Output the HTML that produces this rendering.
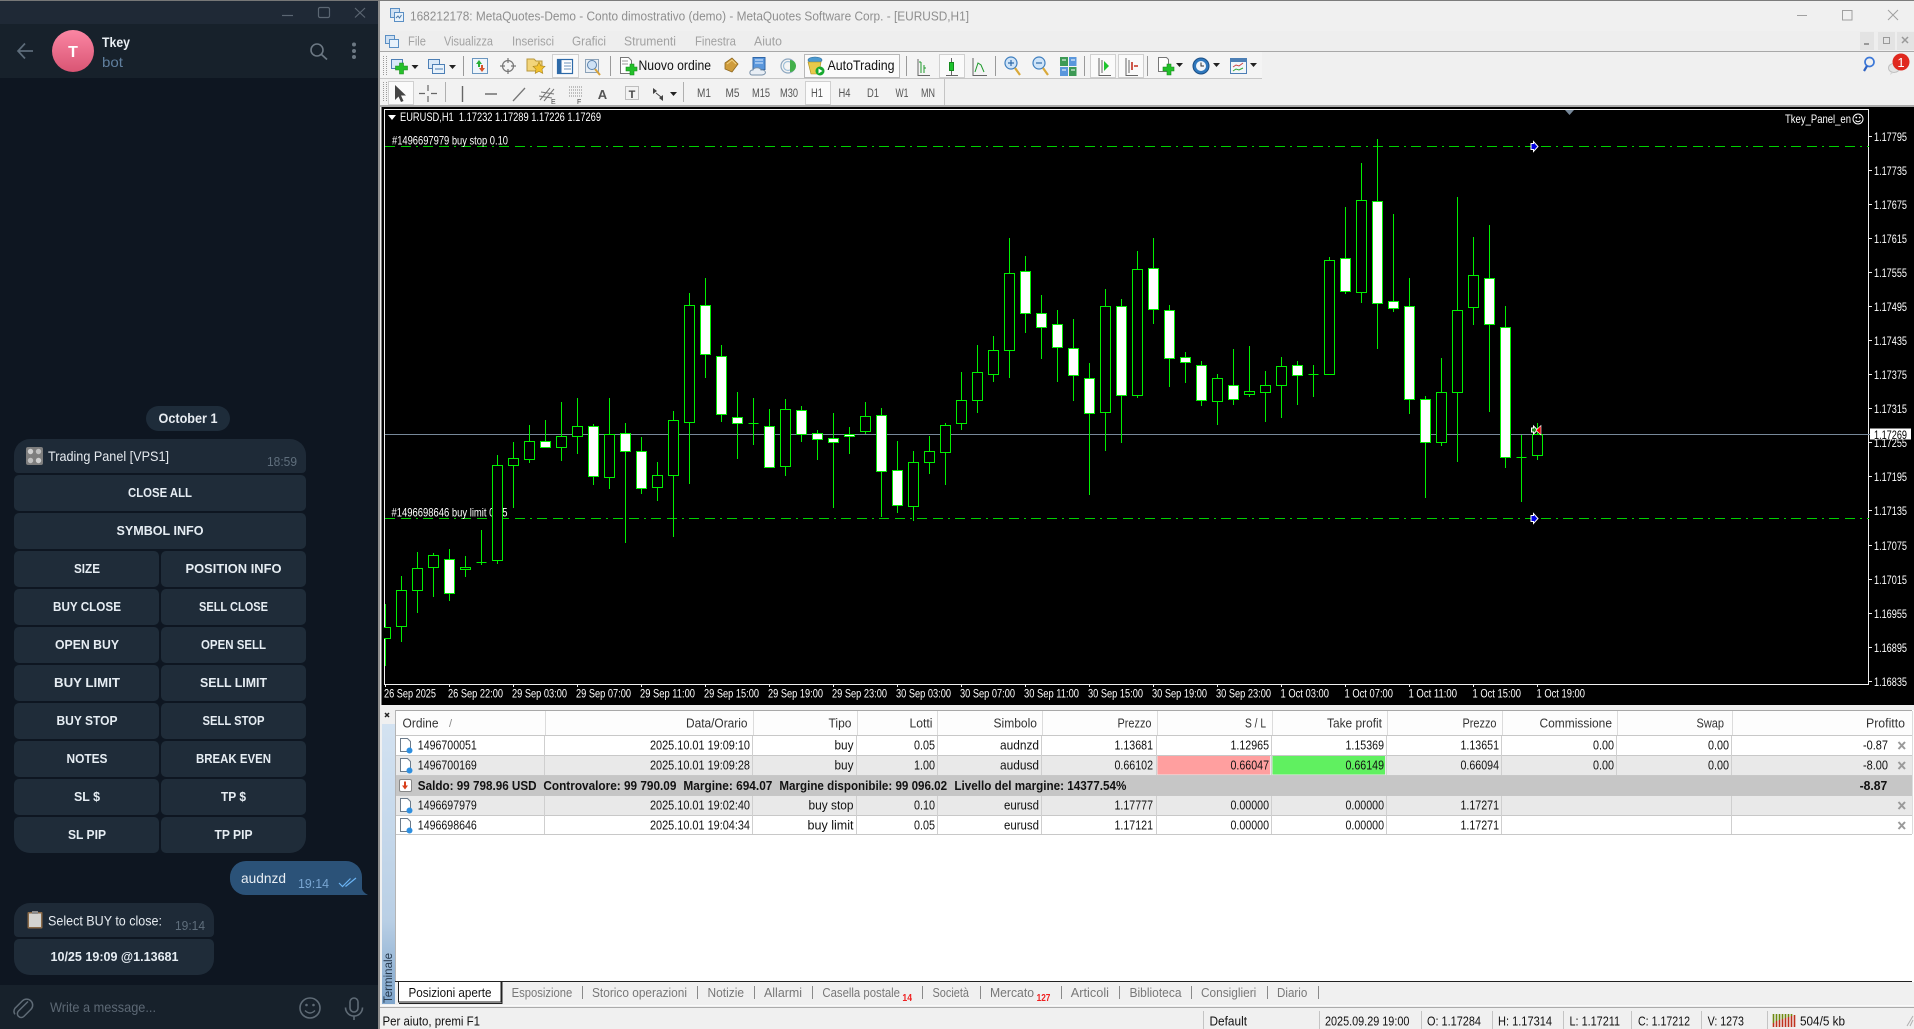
<!DOCTYPE html>
<html lang="it">
<head>
<meta charset="utf-8">
<title>Telegram and MetaTrader</title>
<style>
html,body{margin:0;padding:0;width:1914px;height:1029px;overflow:hidden;background:#f0f0f0}
svg{display:block;position:absolute;left:0;top:0}
text{font-family:"Liberation Sans",sans-serif;white-space:pre}
.b{font-weight:700;font-size:12.5px;fill:#e6edf3;text-anchor:middle}
.m{font-size:13px;fill:#111}
.r{font-size:13px;fill:#111;text-anchor:end}
.h{font-size:13px;fill:#333;text-anchor:end}
.s{font-size:13px;fill:#111;font-weight:700}
.t{font-size:13px;fill:#777}
.f{font-size:11.5px;fill:#555;text-anchor:middle}
.c{font-size:12px;fill:#fff}
.p{font-size:13px;fill:#111}
.mn{font-size:13px;fill:#a2a2a2}
</style>
</head>
<body>
<svg width="1914" height="1029" viewBox="0 0 1914 1029" xmlns="http://www.w3.org/2000/svg">
<defs>
<linearGradient id="av" x1="0" y1="0" x2="0" y2="1"><stop offset="0" stop-color="#fb86a3"/><stop offset="1" stop-color="#d95574"/></linearGradient>
<linearGradient id="st" x1="0" y1="0" x2="0" y2="1"><stop offset="0" stop-color="#d3e2f1"/><stop offset=".7" stop-color="#b9cfe5"/><stop offset="1" stop-color="#7fa5cb"/></linearGradient>
<clipPath id="cc"><rect x="384" y="109" width="1485" height="575"/></clipPath>
</defs>

<!-- ===== TELEGRAM ===== -->
<rect x="0" y="0" width="380" height="1029" fill="#0e1621"/>
<rect x="378" y="0" width="2" height="1029" fill="#8c8c8c"/>
<rect x="0" y="1" width="378" height="23" fill="#1f2936"/>
<rect x="0" y="0" width="380" height="1" fill="#777"/>
<rect x="0" y="24" width="378" height="54" fill="#17212b"/>
<path d="M282 15.500h11" stroke="#5b6672" stroke-width="1.200"/>
<rect x="318.500" y="7.500" width="11" height="10" rx="1.500" fill="none" stroke="#5b6672" stroke-width="1.200"/>
<path d="M355 8l10 9.500M365 8l-10 9.500" stroke="#5b6672" stroke-width="1.200"/>
<path d="M33 51H18.500M25 43.500L18 51l7 7.500" fill="none" stroke="#5d6c7a" stroke-width="1.700"/>
<circle cx="73" cy="51" r="21" fill="url(#av)"/>
<text x="73" y="57" text-anchor="middle" font-size="16" font-weight="700" fill="#fff">T</text>
<text x="102" y="47" font-size="14" font-weight="700" fill="#e9eef3" textLength="28" lengthAdjust="spacingAndGlyphs">Tkey</text>
<text x="102" y="67" font-size="14" fill="#607f9e" textLength="21" lengthAdjust="spacingAndGlyphs">bot</text>
<circle cx="317" cy="50" r="6" fill="none" stroke="#6c7883" stroke-width="1.600"/>
<path d="M321.500 54.500l5.500 5" stroke="#6c7883" stroke-width="1.700"/>
<circle cx="354" cy="44.500" r="2" fill="#6c7883"/><circle cx="354" cy="51" r="2" fill="#6c7883"/><circle cx="354" cy="57" r="2" fill="#6c7883"/>

<rect x="146" y="406" width="84" height="25" rx="12.500" fill="#1e2c3a"/>
<text x="188" y="423" text-anchor="middle" font-size="13.500" font-weight="700" fill="#e8edf2" textLength="59" lengthAdjust="spacingAndGlyphs">October 1</text>

<path d="M30 439H290a16 16 0 0 1 16 16V469a4 4 0 0 1-4 4H18a4 4 0 0 1-4-4V455a16 16 0 0 1 16-16z" fill="#1e2a37"/>
<rect x="26" y="447" width="17" height="18" rx="2" fill="#7e7e7e"/>
<circle cx="30.500" cy="451.500" r="2.700" fill="#cfcfcf"/><circle cx="38.500" cy="451.500" r="2.700" fill="#bfbfbf"/><circle cx="30.500" cy="460.500" r="2.700" fill="#bfbfbf"/><circle cx="38.500" cy="460.500" r="2.700" fill="#cfcfcf"/>
<text x="48" y="461" font-size="14" fill="#e6ebf0" textLength="121" lengthAdjust="spacingAndGlyphs">Trading Panel [VPS1]</text>
<text x="267" y="466" font-size="13" fill="#5f6e7c" textLength="30" lengthAdjust="spacingAndGlyphs">18:59</text>

<g fill="#1f2c39">
<rect x="14" y="475" width="292" height="36" rx="5"/>
<rect x="14" y="513" width="292" height="36" rx="5"/>
<rect x="14" y="551" width="145" height="36" rx="5"/><rect x="161" y="551" width="145" height="36" rx="5"/>
<rect x="14" y="589" width="145" height="36" rx="5"/><rect x="161" y="589" width="145" height="36" rx="5"/>
<rect x="14" y="627" width="145" height="36" rx="5"/><rect x="161" y="627" width="145" height="36" rx="5"/>
<rect x="14" y="665" width="145" height="36" rx="5"/><rect x="161" y="665" width="145" height="36" rx="5"/>
<rect x="14" y="703" width="145" height="36" rx="5"/><rect x="161" y="703" width="145" height="36" rx="5"/>
<rect x="14" y="741" width="145" height="36" rx="5"/><rect x="161" y="741" width="145" height="36" rx="5"/>
<rect x="14" y="779" width="145" height="36" rx="5"/><rect x="161" y="779" width="145" height="36" rx="5"/>
<path d="M19 817H154a5 5 0 0 1 5 5V848a5 5 0 0 1-5 5H30a16 16 0 0 1-16-16V822a5 5 0 0 1 5-5z"/>
<path d="M166 817H301a5 5 0 0 1 5 5V837a16 16 0 0 1-16 16H166a5 5 0 0 1-5-5V822a5 5 0 0 1 5-5z"/>
</g>
<g>
<text class="b" x="160" y="497" textLength="64" lengthAdjust="spacingAndGlyphs">CLOSE ALL</text>
<text class="b" x="160" y="535" textLength="87" lengthAdjust="spacingAndGlyphs">SYMBOL INFO</text>
<text class="b" x="87" y="573" textLength="26" lengthAdjust="spacingAndGlyphs">SIZE</text>
<text class="b" x="233.500" y="573" textLength="96" lengthAdjust="spacingAndGlyphs">POSITION INFO</text>
<text class="b" x="87" y="611" textLength="68" lengthAdjust="spacingAndGlyphs">BUY CLOSE</text>
<text class="b" x="233.500" y="611" textLength="69" lengthAdjust="spacingAndGlyphs">SELL CLOSE</text>
<text class="b" x="87" y="649" textLength="64" lengthAdjust="spacingAndGlyphs">OPEN BUY</text>
<text class="b" x="233.500" y="649" textLength="65" lengthAdjust="spacingAndGlyphs">OPEN SELL</text>
<text class="b" x="87" y="687" textLength="66" lengthAdjust="spacingAndGlyphs">BUY LIMIT</text>
<text class="b" x="233.500" y="687" textLength="67" lengthAdjust="spacingAndGlyphs">SELL LIMIT</text>
<text class="b" x="87" y="725" textLength="61" lengthAdjust="spacingAndGlyphs">BUY STOP</text>
<text class="b" x="233.500" y="725" textLength="62" lengthAdjust="spacingAndGlyphs">SELL STOP</text>
<text class="b" x="87" y="763" textLength="41" lengthAdjust="spacingAndGlyphs">NOTES</text>
<text class="b" x="233.500" y="763" textLength="75" lengthAdjust="spacingAndGlyphs">BREAK EVEN</text>
<text class="b" x="87" y="801" textLength="26" lengthAdjust="spacingAndGlyphs">SL $</text>
<text class="b" x="233.500" y="801" textLength="25" lengthAdjust="spacingAndGlyphs">TP $</text>
<text class="b" x="87" y="839" textLength="38" lengthAdjust="spacingAndGlyphs">SL PIP</text>
<text class="b" x="233.500" y="839" textLength="38" lengthAdjust="spacingAndGlyphs">TP PIP</text>
</g>

<path d="M246 861H346a16 16 0 0 1 16 16V888q0 4 6 7H246a16 16 0 0 1-16-17a16 16 0 0 1 16-17z" fill="#2b5278"/>
<text x="241" y="883" font-size="14" fill="#e8eef4" textLength="45" lengthAdjust="spacingAndGlyphs">audnzd</text>
<text x="298" y="888" font-size="13" fill="#79a6d2" textLength="31" lengthAdjust="spacingAndGlyphs">19:14</text>
<path d="M339 883l3.500 3.500 8-8M345.500 886.500l10.500-8.500" fill="none" stroke="#6ab3f3" stroke-width="1.200"/>

<path d="M30 903H198a16 16 0 0 1 16 16V933a4 4 0 0 1-4 4H18a4 4 0 0 1-4-4V919a16 16 0 0 1 16-16z" fill="#1e2a37"/>
<rect x="27.500" y="912" width="15" height="16.500" rx="1" fill="#8a6a48"/><rect x="29" y="913.500" width="12" height="13.500" fill="#d3d3d0"/><rect x="32" y="911" width="6" height="3" fill="#8c8c8c"/>
<text x="48" y="925.500" font-size="14" fill="#e6ebf0" textLength="114" lengthAdjust="spacingAndGlyphs">Select BUY to close:</text>
<text x="175" y="930" font-size="13" fill="#5f6e7c" textLength="30" lengthAdjust="spacingAndGlyphs">19:14</text>
<path d="M19 939H209a5 5 0 0 1 5 5V959a16 16 0 0 1-16 16H30a16 16 0 0 1-16-16V944a5 5 0 0 1 5-5z" fill="#1f2c39"/>
<text class="b" x="114.500" y="961" textLength="128" lengthAdjust="spacingAndGlyphs">10/25 19:09 @1.13681</text>

<rect x="0" y="985" width="378" height="44" fill="#17212b"/>
<path d="M28 1003.500l-9.500 9.500a3.800 3.800 0 0 0 5.400 5.400l7-7a6 6 0 0 0-8.500-8.500l-7.500 7.500a5.600 5.600 0 0 0 0 6" fill="none" stroke="#5f6b76" stroke-width="1.500" transform="translate(0,-2)"/>
<text x="50" y="1012" font-size="14" fill="#5c6874" textLength="106" lengthAdjust="spacingAndGlyphs">Write a message...</text>
<circle cx="310" cy="1008" r="10" fill="none" stroke="#5f6b76" stroke-width="1.600"/>
<circle cx="306.500" cy="1005" r="1.300" fill="#5f6b76"/><circle cx="313.500" cy="1005" r="1.300" fill="#5f6b76"/>
<path d="M305 1010.500q5 5 10 0" fill="none" stroke="#5f6b76" stroke-width="1.400"/>
<rect x="350" y="998" width="8" height="14" rx="4" fill="none" stroke="#5f6b76" stroke-width="1.600"/>
<path d="M345.500 1007.500a8.500 8.500 0 0 0 17 0M354 1016v4" fill="none" stroke="#5f6b76" stroke-width="1.600"/>

<!-- ===== MT4 chrome ===== -->
<rect x="380" y="0" width="1534" height="1029" fill="#f0f0f0"/>
<rect x="380" y="0" width="1534" height="1" fill="#7c7c7c"/>
<rect x="380" y="31" width="1534" height="20" fill="#eeeeee"/>
<rect x="390.500" y="8.500" width="9" height="9" fill="#cfe0f2" stroke="#5a8fc4"/><rect x="394.500" y="12.500" width="9" height="9" fill="#e8f2fb" stroke="#5a8fc4"/><path d="M396 18l2-2 1.500 2 2-3" stroke="#4a78a8" fill="none"/>
<text x="410" y="20.500" font-size="13" fill="#8f8f8f" textLength="559" lengthAdjust="spacingAndGlyphs">168212178: MetaQuotes-Demo - Conto dimostrativo (demo) - MetaQuotes Software Corp. - [EURUSD,H1]</text>
<path d="M1797 15.500h10" stroke="#a0a0a0"/><rect x="1842.500" y="10.500" width="9.500" height="9.500" fill="none" stroke="#a0a0a0"/><path d="M1888 10l10 10M1898 10l-10 10" stroke="#a0a0a0"/>

<rect x="385.500" y="35.500" width="9" height="8" fill="#cfe0f2" stroke="#5a8fc4"/><rect x="389.500" y="39.500" width="9" height="8" fill="#e8f2fb" stroke="#5a8fc4"/>
<g>
<text class="mn" x="408" y="45.500" textLength="18" lengthAdjust="spacingAndGlyphs">File</text>
<text class="mn" x="444" y="45.500" textLength="49" lengthAdjust="spacingAndGlyphs">Visualizza</text>
<text class="mn" x="512" y="45.500" textLength="42" lengthAdjust="spacingAndGlyphs">Inserisci</text>
<text class="mn" x="572" y="45.500" textLength="34" lengthAdjust="spacingAndGlyphs">Grafici</text>
<text class="mn" x="624" y="45.500" textLength="52" lengthAdjust="spacingAndGlyphs">Strumenti</text>
<text class="mn" x="695" y="45.500" textLength="41" lengthAdjust="spacingAndGlyphs">Finestra</text>
<text class="mn" x="754" y="45.500" textLength="28" lengthAdjust="spacingAndGlyphs">Aiuto</text>
</g>
<rect x="1860" y="32" width="14" height="18" fill="#e3e3e3"/><rect x="1878" y="32" width="17" height="18" fill="#e3e3e3"/><rect x="1897" y="32" width="17" height="18" fill="#e3e3e3"/>
<path d="M1864 44h5" stroke="#999" stroke-width="2"/><rect x="1883.500" y="37.500" width="6" height="6" fill="none" stroke="#999"/><path d="M1902 37l6 6M1908 37l-6 6" stroke="#999" stroke-width="1.500"/>

<rect x="380" y="51" width="1534" height="1" fill="#a8a8a8"/>
<rect x="380" y="52" width="882" height="26" fill="#f4f4f4"/>
<rect x="380" y="78" width="882" height="1" fill="#c6c6c6"/>
<rect x="380" y="79" width="565" height="26" fill="#f2f2f2"/>
<rect x="944" y="79" width="1" height="26" fill="#c4c4c4"/>
<rect x="380" y="105" width="1534" height="2" fill="#aaaaaa"/>

<!-- toolbar 1 -->
<g stroke="#9a9a9a"><path d="M383.500 56v20M386.500 56v20" stroke-dasharray="1 1"/><path d="M463.500 56v20M610.500 56v20M906.500 56v20M995.500 56v20M1084.500 56v20M1147.500 56v20"/></g>
<rect x="552.500" y="54.500" width="26" height="23" fill="#fafafa" stroke="#d0d0d0"/>
<rect x="804.500" y="54.500" width="95" height="23" fill="#fbfbfb" stroke="#b8b8b8"/>
<rect x="939.500" y="54.500" width="25" height="23" fill="#fafafa" stroke="#d0d0d0"/>
<rect x="1090.500" y="54.500" width="25" height="23" fill="#fafafa" stroke="#d0d0d0"/>
<rect x="1118.500" y="54.500" width="25" height="23" fill="#fafafa" stroke="#d0d0d0"/>
<!-- new chart -->
<rect x="391.500" y="59.500" width="11" height="9" fill="#d8e8f8" stroke="#4d7fb5"/><path d="M399.500 63h4v3h4v4h-4v4h-4v-4h-4v-4h4z" fill="#25c02a" stroke="#1a8a1e" stroke-width=".6"/>
<path d="M411.500 65h7l-3.500 4z" fill="#222"/>
<!-- profiles -->
<rect x="428.500" y="59.500" width="11" height="9" fill="#d8e8f8" stroke="#4d7fb5"/><rect x="432.500" y="64.500" width="12" height="9" fill="#e8f2fb" stroke="#4d7fb5"/><path d="M435 69h8" stroke="#4d7fb5"/>
<path d="M449 65h7l-3.500 4z" fill="#222"/>
<!-- market watch -->
<rect x="472.500" y="58.500" width="15" height="15" fill="#eef5fb" stroke="#6b96bf"/><path d="M479 60l-3 4h2v3h2v-3h2z" fill="#27ae35"/><path d="M482 72l3-4h-2v-3h-2v3h-2z" fill="#d9542b"/>
<!-- navigator crosshair -->
<circle cx="508" cy="66" r="5.500" fill="none" stroke="#777" stroke-width="1.200"/><path d="M508 58v5M508 69v5M500 66h5M511 66h5" stroke="#777" stroke-width="1.200"/>
<!-- folder star -->
<path d="M527 59h7l2 2h6v10h-15z" fill="#f3d57a" stroke="#b8973c"/><path d="M539 62l1.800 3.800 4.200.5-3 2.900.8 4.200-3.800-2-3.800 2 .8-4.200-3-2.900 4.200-.5z" fill="#f2c12e" stroke="#a8831d" stroke-width=".6"/>
<!-- terminal -->
<rect x="557.500" y="59.500" width="15" height="14" fill="#fff" stroke="#2e6aa8" stroke-width="1.200"/><rect x="557.500" y="59.500" width="4" height="14" fill="#2e6aa8"/><path d="M564 63h7M564 66h7M564 69h7" stroke="#6d93bb"/>
<!-- strategy -->
<rect x="585.500" y="59.500" width="13" height="13" fill="#e8eef4" stroke="#8ca2b8"/><circle cx="592" cy="65" r="4.500" fill="#cfe2f5" stroke="#5a82ad"/><path d="M595 69l5 6" stroke="#d8a23a" stroke-width="2"/>
<!-- nuovo ordine -->
<path d="M620.500 57.500h8l3 3v13h-11z" fill="#fff" stroke="#777"/><path d="M622 61h6M622 64h6" stroke="#999"/><path d="M626 67h4v-3h4v3h3v4h-3v4h-4v-4h-4z" fill="#22c02a" stroke="#148a1a" stroke-width=".6"/>
<text x="638.500" y="70" font-size="14" fill="#111" textLength="72.500" lengthAdjust="spacingAndGlyphs">Nuovo ordine</text>
<!-- book -->
<path d="M725 63l7-5 6 6-6 8-7-3z" fill="#cf9c3c" stroke="#8e6820" stroke-width=".8"/><path d="M727 64l5-4 4 4" fill="none" stroke="#f2d283"/>
<!-- history -->
<rect x="753" y="57.500" width="12" height="12" fill="#5a97dc" stroke="#2f66a8"/><path d="M755 60h8M755 63h8" stroke="#dfeeff"/><path d="M752 75c-3 0-3-5 1-5 1-3 7-3 8 0 4-1 7 4 1 5z" fill="#e8eef5" stroke="#7890a8"/>
<!-- signal -->
<circle cx="788" cy="66" r="7" fill="none" stroke="#8fa8c0" stroke-width="1.200"/><circle cx="788" cy="66" r="4.500" fill="none" stroke="#9fc0d8" stroke-width="1.200"/><path d="M790 60v12a6 6 0 0 0 0-12z" fill="#43b04a"/>
<!-- autotrading -->
<ellipse cx="815" cy="60" rx="7" ry="3" fill="#4d9ad0" stroke="#2d6a98" stroke-width=".6"/><path d="M808 62h13l-2 12h-8z" fill="#e9c94a" stroke="#a88b20" stroke-width=".6"/><circle cx="820" cy="71" r="4.500" fill="#16a82e"/><path d="M818.500 68.500l4 2.500-4 2.500z" fill="#fff"/>
<text x="827.500" y="70" font-size="14" fill="#111" textLength="67" lengthAdjust="spacingAndGlyphs">AutoTrading</text>
<!-- chart types -->
<path d="M918 75.500h12M918 59v17" stroke="#666" fill="none"/><path d="M921 62v11M924 65v8M921 62h-2M924 68h2" stroke="#1e9a2c" fill="none"/>
<path d="M951.500 58v17M946 75.500h12" stroke="#666" fill="none"/><rect x="949.500" y="62.500" width="4" height="8" fill="#1ec42e" stroke="#148a1e"/>
<path d="M973 58v17.500h14" stroke="#666" fill="none"/><path d="M975 72l3-9 3 2 3 7" stroke="#1e9a2c" fill="none"/>
<!-- zoom -->
<circle cx="1011" cy="63" r="6" fill="#cfe4f8" stroke="#3f7fbf" stroke-width="1.200"/><path d="M1008 63h6M1011 60v6" stroke="#2e6aa8" stroke-width="1.200"/><path d="M1015 68l5 7" stroke="#d9a93a" stroke-width="2.200"/>
<circle cx="1039" cy="63" r="6" fill="#cfe4f8" stroke="#3f7fbf" stroke-width="1.200"/><path d="M1036 63h6" stroke="#2e6aa8" stroke-width="1.200"/><path d="M1043 68l5 7" stroke="#d9a93a" stroke-width="2.200"/>
<rect x="1060" y="57" width="8" height="9" fill="#3d9a55"/><rect x="1069" y="57" width="7.500" height="9" fill="#5a97dc"/><rect x="1060" y="67" width="8" height="9" fill="#5a97dc"/><rect x="1069" y="67" width="7.500" height="9" fill="#3d9a55"/><path d="M1062 60h4M1071 60h4M1062 70h4M1071 70h4" stroke="#fff"/>
<!-- scroll -->
<path d="M1099 58v17.500h12M1102 60v13" stroke="#666" fill="none"/><path d="M1104 61l5 5-5 5z" fill="#1ec42e"/>
<path d="M1126 58v17.500h12M1129 60v13" stroke="#666" fill="none"/><path d="M1132 62v8M1134 66h4" stroke="#c42f1e" stroke-width="1.600"/>
<!-- indicators -->
<path d="M1158.500 57.500h8l2 2v12h-10z" fill="#fff" stroke="#777"/><path d="M1163 67h4v-3h4v3h3v4h-3v4h-4v-4h-4z" fill="#22c02a" stroke="#148a1a" stroke-width=".6"/>
<path d="M1176 63h7l-3.500 4z" fill="#222"/>
<circle cx="1201" cy="66" r="8" fill="#2f78bd" stroke="#1c4f85"/><circle cx="1201" cy="66" r="5" fill="#f2f6fa"/><path d="M1201 62.500V66h3" stroke="#333" fill="none"/>
<path d="M1213 63h7l-3.500 4z" fill="#222"/>
<rect x="1230.500" y="58.500" width="16" height="15" fill="#f2f6fa" stroke="#4d7fb5"/><rect x="1231" y="59" width="15" height="3" fill="#4d7fb5"/><path d="M1233 67l3-2 3 1 4-3" stroke="#c44" fill="none"/><path d="M1233 71l3-2 3 1 4-2" stroke="#3a3" fill="none"/>
<path d="M1250 63h7l-3.500 4z" fill="#222"/>
<!-- search and notifications -->
<circle cx="1869.500" cy="62" r="4.500" fill="none" stroke="#3c78d8" stroke-width="1.700"/><path d="M1867 66l-3 5" stroke="#2e62c2" stroke-width="2.200"/>
<ellipse cx="1894" cy="68" rx="5.500" ry="4.500" fill="#e4e4e4" stroke="#c0c0c0"/><path d="M1891 72l-1 3 3-2z" fill="#d8d8d8"/>
<circle cx="1901" cy="62" r="8.500" fill="#e0281e"/>
<text x="1901" y="67" text-anchor="middle" font-size="13" fill="#fff">1</text>

<!-- toolbar 2 -->
<path d="M383.500 82v20M386.500 82v20" stroke="#9a9a9a" stroke-dasharray="1 1"/>
<path d="M445.500 82v20M683.500 82v20" stroke="#b0b0b0"/>
<rect x="388.500" y="81.500" width="25" height="23" fill="#fafafa" stroke="#d0d0d0"/>
<path d="M395 85v15l3.500-3.500 2.500 5.500 2.500-1-2.500-5.500h5z" fill="#444"/>
<path d="M428 85v6M428 96v6M419 93.500h6M431 93.500h6" stroke="#666" stroke-width="1.200"/>
<path d="M462.500 86v16" stroke="#666" stroke-width="1.400"/>
<path d="M485 94h12" stroke="#666" stroke-width="1.400"/>
<path d="M513 101l12-13" stroke="#777" stroke-width="1.300"/>
<path d="M540 100l10-12M544 101l10-12M541 92l13 2M539 96l13 2" stroke="#777"/><text x="551" y="104" font-size="7" fill="#444">E</text>
<path d="M569 87h13M569 90h13M569 93h13M569 96h13" stroke="#888" stroke-dasharray="1 1"/><text x="577" y="104" font-size="7" fill="#444">F</text>
<text x="602.500" y="99" text-anchor="middle" font-size="13" font-weight="700" fill="#555">A</text>
<rect x="625.500" y="86.500" width="13" height="13" fill="none" stroke="#888" stroke-dasharray="1 1"/><text x="632" y="98" text-anchor="middle" font-size="11" font-weight="700" fill="#444">T</text>
<path d="M653 88l4 3-4 3zM663 95l-4 3 4 3z" fill="#444"/><path d="M656 93l5 4" stroke="#444"/>
<path d="M670 92h7l-3.500 4z" fill="#222"/>
<rect x="805.500" y="81.500" width="25" height="23" fill="#fbfbfb" stroke="#d0d0d0"/>
<text class="f" x="704" y="97" textLength="14" lengthAdjust="spacingAndGlyphs">M1</text>
<text class="f" x="732.500" y="97" textLength="14" lengthAdjust="spacingAndGlyphs">M5</text>
<text class="f" x="761" y="97" textLength="18" lengthAdjust="spacingAndGlyphs">M15</text>
<text class="f" x="789" y="97" textLength="18" lengthAdjust="spacingAndGlyphs">M30</text>
<text class="f" x="817" y="97" textLength="12" lengthAdjust="spacingAndGlyphs">H1</text>
<text class="f" x="844.500" y="97" textLength="12" lengthAdjust="spacingAndGlyphs">H4</text>
<text class="f" x="873" y="97" textLength="12" lengthAdjust="spacingAndGlyphs">D1</text>
<text class="f" x="902" y="97" textLength="13" lengthAdjust="spacingAndGlyphs">W1</text>
<text class="f" x="928" y="97" textLength="14" lengthAdjust="spacingAndGlyphs">MN</text>

<!-- ===== CHART ===== -->
<rect x="381.500" y="107" width="1532.500" height="598" fill="#000"/>
<path d="M384.500 109V684M384 109.500H1869M1868.500 109V684M384 684.500H1869" stroke="#f0f0f0" fill="none"/>
<g stroke="#f0f0f0">
<path d="M385.500 684v3M449.500 684v3M513.500 684v3M577.500 684v3M641.500 684v3M705.500 684v3M769.500 684v3M833.500 684v3M897.500 684v3M961.500 684v3M1025.500 684v3M1089.500 684v3M1153.500 684v3M1217.500 684v3M1281.500 684v3M1345.500 684v3M1409.500 684v3M1473.500 684v3M1537.500 684v3"/>
<path d="M1869 136.500h3M1869 170.500h3M1869 204.500h3M1869 238.500h3M1869 272.500h3M1869 306.500h3M1869 340.500h3M1869 374.500h3M1869 408.500h3M1869 442.500h3M1869 476.500h3M1869 510.500h3M1869 545.500h3M1869 579.500h3M1869 613.500h3M1869 647.500h3M1869 681.500h3"/>
</g>
<g clip-path="url(#cc)">
<path d="M385 434.500H1869" stroke="#778899"/>
<path d="M385 146.500H1869M385 518.500H1869" stroke="#00cf00" stroke-dasharray="10 6 10 5 2 5"/>
<text class="c" x="392" y="144.500" textLength="116" lengthAdjust="spacingAndGlyphs">#1496697979 buy stop 0.10</text>
<text class="c" x="391.500" y="516.500" textLength="116" lengthAdjust="spacingAndGlyphs">#1496698646 buy limit 0.05</text>
<!-- wicks -->
<path stroke="#00f000" fill="none" shape-rendering="crispEdges" d="M385.500 604V666M401.500 576V642M417.500 552V613M433.500 553V597M449.500 549V601M465.500 556V577M481.500 530V565M497.500 455V564M513.500 442V508M529.500 425V463M545.500 420V447M561.500 402V461M577.500 398V454M593.500 424V485M609.500 398V489M625.500 423V543M641.500 437V494M657.500 462V501M673.500 411V537M689.500 293V484M705.500 278V378M721.500 345V422M737.500 392V459M753.500 398V445M769.500 409V467M785.500 399V476M801.500 406V442M817.500 430V460M833.500 413V508M849.500 427V454M865.500 402V434M881.500 408V517M897.500 441V513M913.500 451V521M929.500 436V474M945.500 423V485M961.500 372V430M977.500 345V413M993.500 336V382M1009.500 238V378M1025.500 256V333M1041.500 295V359M1057.500 310V382M1073.500 319V401M1089.500 363V495M1105.500 289V451M1121.500 299V443M1137.500 251V398M1153.500 238V324M1169.500 305V387M1185.500 352V383M1201.500 361V406M1217.500 374V425M1233.500 349V405M1249.500 346V397M1265.500 371V422M1281.500 357V418M1297.500 361V405M1313.500 365V397M1329.500 257V375M1345.500 207V294M1361.500 163V303M1377.500 139V349M1393.500 214V312M1409.500 278V414M1425.500 396V498M1441.500 358V446M1457.500 197V462M1473.500 237V325M1489.500 225V412M1505.500 306V468M1521.500 435V502M1537.500 423V460"/>
<!-- dojis -->
<path stroke="#00f000" fill="none" shape-rendering="crispEdges" d="M476.500 562.500h10M748.500 423.500h10M1308.500 374.500h10M1516.500 457.500h10"/>
<!-- hollow bodies -->
<path fill="#000" stroke="#00f000" shape-rendering="crispEdges" d="M380.500 627.500h10v11h-10zM396.500 590.500h10v36h-10zM412.500 568.500h10v22h-10zM428.500 555.500h10v12h-10zM460.500 567.500h10v2h-10zM492.500 465.500h10v95h-10zM508.500 458.500h10v7h-10zM524.500 441.500h10v18h-10zM556.500 436.500h10v11h-10zM572.500 426.500h10v10h-10zM604.500 434.500h10v43h-10zM652.500 475.500h10v12h-10zM668.500 420.500h10v55h-10zM684.500 305.500h10v117h-10zM780.500 409.500h10v57h-10zM860.500 416.500h10v15h-10zM908.500 462.500h10v44h-10zM924.500 451.500h10v11h-10zM940.500 425.500h10v27h-10zM956.500 400.500h10v23h-10zM972.500 372.500h10v28h-10zM988.500 350.500h10v24h-10zM1004.500 273.500h10v77h-10zM1100.500 306.500h10v106h-10zM1132.500 269.500h10v126h-10zM1212.500 378.500h10v23h-10zM1244.500 391.500h10v3h-10zM1260.500 385.500h10v7h-10zM1276.500 366.500h10v19h-10zM1324.500 260.500h10v114h-10zM1356.500 200.500h10v92h-10zM1436.500 392.500h10v50h-10zM1452.500 310.500h10v82h-10zM1468.500 275.500h10v32h-10zM1532.500 434.500h10v21h-10z"/>
<!-- white bodies -->
<path fill="#fff" stroke="#00f000" shape-rendering="crispEdges" d="M444.500 559.500h10v34h-10zM540.500 441.500h10v6h-10zM588.500 426.500h10v50h-10zM620.500 433.500h10v18h-10zM636.500 451.500h10v37h-10zM700.500 305.500h10v49h-10zM716.500 356.500h10v58h-10zM732.500 417.500h10v6h-10zM764.500 426.500h10v41h-10zM796.500 410.500h10v24h-10zM812.500 433.500h10v6h-10zM828.500 438.500h10v4h-10zM844.500 434.500h10v2h-10zM876.500 415.500h10v56h-10zM892.500 470.500h10v35h-10zM1020.500 271.500h10v42h-10zM1036.500 313.500h10v14h-10zM1052.500 324.500h10v23h-10zM1068.500 348.500h10v27h-10zM1084.500 378.500h10v35h-10zM1116.500 306.500h10v89h-10zM1148.500 268.500h10v41h-10zM1164.500 310.500h10v48h-10zM1180.500 357.500h10v5h-10zM1196.500 365.500h10v35h-10zM1228.500 385.500h10v14h-10zM1292.500 365.500h10v10h-10zM1340.500 258.500h10v33h-10zM1372.500 201.500h10v102h-10zM1388.500 301.500h10v7h-10zM1404.500 306.500h10v93h-10zM1420.500 399.500h10v43h-10zM1484.500 278.500h10v46h-10zM1500.500 327.500h10v130h-10z"/>
</g>
<!-- order arrows -->
<path d="M1531 143.500h2.500v-2l4.500 5-4.500 5v-2H1531z" fill="#0000e0" stroke="#fff" stroke-width="1"/>
<path d="M1531 515.500h2.500v-2l4.500 5-4.500 5v-2H1531z" fill="#0000e0" stroke="#fff" stroke-width="1"/>
<path d="M1531.500 428h2v-2l4 4-4 4v-2h-2z" fill="#1a8a1a" stroke="#fff"/>
<path d="M1541 425.500v9.500l-5-4.700z" fill="#f00000" stroke="#fff" stroke-width=".6"/>
<!-- chart top labels -->
<path d="M388 115h8l-4 5z" fill="#fff"/>
<text class="c" x="400" y="121" textLength="201" lengthAdjust="spacingAndGlyphs">EURUSD,H1  1.17232 1.17289 1.17226 1.17269</text>
<text class="c" x="1785" y="123" textLength="66" lengthAdjust="spacingAndGlyphs">Tkey_Panel_en</text>
<circle cx="1858" cy="119" r="5" fill="none" stroke="#fff"/><circle cx="1856.300" cy="117.500" r=".9" fill="#fff"/><circle cx="1859.700" cy="117.500" r=".9" fill="#fff"/><path d="M1855.500 120.500q2.500 2.500 5 0" fill="none" stroke="#fff"/>
<path d="M1565 110h9l-4.500 5z" fill="#778899"/>
<!-- price scale -->
<g>
<text class="c" x="1874" y="141" textLength="33" lengthAdjust="spacingAndGlyphs">1.17795</text>
<text class="c" x="1874" y="175" textLength="33" lengthAdjust="spacingAndGlyphs">1.17735</text>
<text class="c" x="1874" y="209" textLength="33" lengthAdjust="spacingAndGlyphs">1.17675</text>
<text class="c" x="1874" y="243" textLength="33" lengthAdjust="spacingAndGlyphs">1.17615</text>
<text class="c" x="1874" y="277" textLength="33" lengthAdjust="spacingAndGlyphs">1.17555</text>
<text class="c" x="1874" y="311" textLength="33" lengthAdjust="spacingAndGlyphs">1.17495</text>
<text class="c" x="1874" y="345" textLength="33" lengthAdjust="spacingAndGlyphs">1.17435</text>
<text class="c" x="1874" y="379" textLength="33" lengthAdjust="spacingAndGlyphs">1.17375</text>
<text class="c" x="1874" y="413" textLength="33" lengthAdjust="spacingAndGlyphs">1.17315</text>
<text class="c" x="1874" y="447" textLength="33" lengthAdjust="spacingAndGlyphs">1.17255</text>
<text class="c" x="1874" y="481" textLength="33" lengthAdjust="spacingAndGlyphs">1.17195</text>
<text class="c" x="1874" y="515" textLength="33" lengthAdjust="spacingAndGlyphs">1.17135</text>
<text class="c" x="1874" y="550" textLength="33" lengthAdjust="spacingAndGlyphs">1.17075</text>
<text class="c" x="1874" y="584" textLength="33" lengthAdjust="spacingAndGlyphs">1.17015</text>
<text class="c" x="1874" y="618" textLength="33" lengthAdjust="spacingAndGlyphs">1.16955</text>
<text class="c" x="1874" y="652" textLength="33" lengthAdjust="spacingAndGlyphs">1.16895</text>
<text class="c" x="1874" y="686" textLength="33" lengthAdjust="spacingAndGlyphs">1.16835</text>
</g>
<path d="M1868 434.500h3" stroke="#778899"/>
<rect x="1870" y="428.500" width="41" height="11" fill="#fff"/>
<text x="1874" y="439" font-size="12" fill="#000" textLength="33" lengthAdjust="spacingAndGlyphs">1.17269</text>
<!-- time scale -->
<g>
<text class="c" x="384" y="697.500" textLength="52" lengthAdjust="spacingAndGlyphs">26 Sep 2025</text>
<text class="c" x="448" y="697.500" textLength="55" lengthAdjust="spacingAndGlyphs">26 Sep 22:00</text>
<text class="c" x="512" y="697.500" textLength="55" lengthAdjust="spacingAndGlyphs">29 Sep 03:00</text>
<text class="c" x="576" y="697.500" textLength="55" lengthAdjust="spacingAndGlyphs">29 Sep 07:00</text>
<text class="c" x="640" y="697.500" textLength="55" lengthAdjust="spacingAndGlyphs">29 Sep 11:00</text>
<text class="c" x="704" y="697.500" textLength="55" lengthAdjust="spacingAndGlyphs">29 Sep 15:00</text>
<text class="c" x="768" y="697.500" textLength="55" lengthAdjust="spacingAndGlyphs">29 Sep 19:00</text>
<text class="c" x="832" y="697.500" textLength="55" lengthAdjust="spacingAndGlyphs">29 Sep 23:00</text>
<text class="c" x="896" y="697.500" textLength="55" lengthAdjust="spacingAndGlyphs">30 Sep 03:00</text>
<text class="c" x="960" y="697.500" textLength="55" lengthAdjust="spacingAndGlyphs">30 Sep 07:00</text>
<text class="c" x="1024" y="697.500" textLength="55" lengthAdjust="spacingAndGlyphs">30 Sep 11:00</text>
<text class="c" x="1088" y="697.500" textLength="55" lengthAdjust="spacingAndGlyphs">30 Sep 15:00</text>
<text class="c" x="1152" y="697.500" textLength="55" lengthAdjust="spacingAndGlyphs">30 Sep 19:00</text>
<text class="c" x="1216" y="697.500" textLength="55" lengthAdjust="spacingAndGlyphs">30 Sep 23:00</text>
<text class="c" x="1280.500" y="697.500" textLength="48.500" lengthAdjust="spacingAndGlyphs">1 Oct 03:00</text>
<text class="c" x="1344.500" y="697.500" textLength="48.500" lengthAdjust="spacingAndGlyphs">1 Oct 07:00</text>
<text class="c" x="1408.500" y="697.500" textLength="48.500" lengthAdjust="spacingAndGlyphs">1 Oct 11:00</text>
<text class="c" x="1472.500" y="697.500" textLength="48.500" lengthAdjust="spacingAndGlyphs">1 Oct 15:00</text>
<text class="c" x="1536.500" y="697.500" textLength="48.500" lengthAdjust="spacingAndGlyphs">1 Oct 19:00</text>
</g>

<!-- ===== TERMINAL ===== -->
<rect x="380" y="705" width="1534" height="303" fill="#f0f0f0"/>
<path d="M385 713l4 4M389 713l-4 4" stroke="#222" stroke-width="1.500"/>
<rect x="382" y="724" width="13" height="280" fill="url(#st)"/>
<text transform="translate(392,1003) rotate(-90)" font-size="12" fill="#26384c" textLength="50" lengthAdjust="spacingAndGlyphs">Terminale</text>
<rect x="395" y="710" width="1519" height="272" fill="#fff"/>
<path d="M395 710.500H1912" stroke="#a8a8a8"/>
<rect x="395" y="711" width="1519" height="24" fill="#fdfdfd"/>
<path d="M395 735.500H1912" stroke="#c8c8c8"/>
<path d="M395.500 710V982" stroke="#b4b4b4"/>
<rect x="396" y="756" width="1516" height="19" fill="#e9e9e9"/>
<rect x="396" y="776" width="1516" height="20" fill="#c6c6c6"/>
<rect x="396" y="796" width="1516" height="19" fill="#e9e9e9"/>
<rect x="1157.500" y="756" width="112.500" height="18.500" fill="#ff9f9f"/>
<rect x="1272.500" y="756" width="112.500" height="18.500" fill="#60f060"/>
<path d="M396 755.500H1912M396 775.500H1912M396 815.500H1912M396 834.500H1912" stroke="#c8c8c8"/>
<path d="M545.500 711V735M753.500 711V735M857.500 711V735M937.500 711V735M1042.500 711V735M1157.500 711V735M1272.500 711V735M1387.500 711V735M1502.500 711V735M1617.500 711V735M1732.500 711V735M1912.500 711V834" stroke="#dcdcdc"/>
<path d="M544.500 736V775M752.500 736V775M856.500 736V775M937.500 736V775M1041.500 736V775M1156.500 736V775M1271.500 736V775M1386.500 736V775M1501.500 736V775M1616.500 736V775M1731.500 736V775M544.500 796V834M752.500 796V834M856.500 796V834M937.500 796V834M1041.500 796V834M1156.500 796V834M1271.500 796V834M1386.500 796V834M1501.500 796V834M1731.500 796V834" stroke="#cfcfcf"/>
<!-- header -->
<text x="402.500" y="727.500" class="p" style="fill:#333" textLength="36" lengthAdjust="spacingAndGlyphs">Ordine</text>
<text x="449" y="727" font-size="11" fill="#888">/</text>
<text class="h" x="747.500" y="727.500" textLength="61.500" lengthAdjust="spacingAndGlyphs">Data/Orario</text>
<text class="h" x="851.500" y="727.500" textLength="23" lengthAdjust="spacingAndGlyphs">Tipo</text>
<text class="h" x="932.500" y="727.500" textLength="23" lengthAdjust="spacingAndGlyphs">Lotti</text>
<text class="h" x="1037" y="727.500" textLength="43.500" lengthAdjust="spacingAndGlyphs">Simbolo</text>
<text class="h" x="1151.500" y="727.500" textLength="34" lengthAdjust="spacingAndGlyphs">Prezzo</text>
<text class="h" x="1266" y="727.500" textLength="21" lengthAdjust="spacingAndGlyphs">S / L</text>
<text class="h" x="1382" y="727.500" textLength="55" lengthAdjust="spacingAndGlyphs">Take profit</text>
<text class="h" x="1496.500" y="727.500" textLength="34" lengthAdjust="spacingAndGlyphs">Prezzo</text>
<text class="h" x="1612" y="727.500" textLength="72.500" lengthAdjust="spacingAndGlyphs">Commissione</text>
<text class="h" x="1724" y="727.500" textLength="27.500" lengthAdjust="spacingAndGlyphs">Swap</text>
<text class="h" x="1905" y="727.500" textLength="39" lengthAdjust="spacingAndGlyphs">Profitto</text>
<!-- row icons -->
<g>
<path d="M400.500 738.500h7l3 3v10h-10z" fill="#fff" stroke="#6a7a8a"/><circle cx="409.500" cy="750.500" r="3" fill="#2e8fe0"/>
<path d="M400.500 758.500h7l3 3v10h-10z" fill="#fff" stroke="#6a7a8a"/><circle cx="409.500" cy="770.500" r="3" fill="#2e8fe0"/>
<path d="M400.500 798.500h7l3 3v10h-10z" fill="#fff" stroke="#6a7a8a"/><circle cx="409.500" cy="810.500" r="3" fill="#2e8fe0"/>
<path d="M400.500 818.500h7l3 3v10h-10z" fill="#fff" stroke="#6a7a8a"/><circle cx="409.500" cy="830.500" r="3" fill="#2e8fe0"/>
<rect x="399.500" y="779.500" width="12" height="12" rx="1.500" fill="#fff" stroke="#888"/><path d="M404 781.500h2v4h2l-3 4-3-4h2z" fill="#d8401c"/>
</g>
<!-- row 1 -->
<text class="m" x="417.800" y="749.500" textLength="59" lengthAdjust="spacingAndGlyphs">1496700051</text>
<text class="r" x="750" y="749.500" textLength="100" lengthAdjust="spacingAndGlyphs">2025.10.01 19:09:10</text>
<text class="r" x="853.500" y="749.500" textLength="19" lengthAdjust="spacingAndGlyphs">buy</text>
<text class="r" x="935" y="749.500" textLength="21" lengthAdjust="spacingAndGlyphs">0.05</text>
<text class="r" x="1039" y="749.500" textLength="39" lengthAdjust="spacingAndGlyphs">audnzd</text>
<text class="r" x="1153" y="749.500" textLength="38.500" lengthAdjust="spacingAndGlyphs">1.13681</text>
<text class="r" x="1269" y="749.500" textLength="38.500" lengthAdjust="spacingAndGlyphs">1.12965</text>
<text class="r" x="1384" y="749.500" textLength="38.500" lengthAdjust="spacingAndGlyphs">1.15369</text>
<text class="r" x="1499" y="749.500" textLength="38.500" lengthAdjust="spacingAndGlyphs">1.13651</text>
<text class="r" x="1614" y="749.500" textLength="21" lengthAdjust="spacingAndGlyphs">0.00</text>
<text class="r" x="1729" y="749.500" textLength="21" lengthAdjust="spacingAndGlyphs">0.00</text>
<text class="r" x="1888" y="749.500" textLength="25" lengthAdjust="spacingAndGlyphs">-0.87</text>
<!-- row 2 -->
<text class="m" x="417.800" y="769.500" textLength="59" lengthAdjust="spacingAndGlyphs">1496700169</text>
<text class="r" x="750" y="769.500" textLength="100" lengthAdjust="spacingAndGlyphs">2025.10.01 19:09:28</text>
<text class="r" x="853.500" y="769.500" textLength="19" lengthAdjust="spacingAndGlyphs">buy</text>
<text class="r" x="935" y="769.500" textLength="21" lengthAdjust="spacingAndGlyphs">1.00</text>
<text class="r" x="1039" y="769.500" textLength="39" lengthAdjust="spacingAndGlyphs">audusd</text>
<text class="r" x="1153" y="769.500" textLength="38.500" lengthAdjust="spacingAndGlyphs">0.66102</text>
<text class="r" x="1269" y="769.500" textLength="38.500" lengthAdjust="spacingAndGlyphs">0.66047</text>
<text class="r" x="1384" y="769.500" textLength="38.500" lengthAdjust="spacingAndGlyphs">0.66149</text>
<text class="r" x="1499" y="769.500" textLength="38.500" lengthAdjust="spacingAndGlyphs">0.66094</text>
<text class="r" x="1614" y="769.500" textLength="21" lengthAdjust="spacingAndGlyphs">0.00</text>
<text class="r" x="1729" y="769.500" textLength="21" lengthAdjust="spacingAndGlyphs">0.00</text>
<text class="r" x="1888" y="769.500" textLength="25" lengthAdjust="spacingAndGlyphs">-8.00</text>
<!-- summary -->
<text class="s" x="417.800" y="790" textLength="118.800" lengthAdjust="spacingAndGlyphs">Saldo: 99 798.96 USD</text>
<text class="s" x="543.400" y="790" textLength="133" lengthAdjust="spacingAndGlyphs">Controvalore: 99 790.09</text>
<text class="s" x="683.400" y="790" textLength="89" lengthAdjust="spacingAndGlyphs">Margine: 694.07</text>
<text class="s" x="779.400" y="790" textLength="167.700" lengthAdjust="spacingAndGlyphs">Margine disponibile: 99 096.02</text>
<text class="s" x="954.400" y="790" textLength="172" lengthAdjust="spacingAndGlyphs">Livello del margine: 14377.54%</text>
<text class="s" x="1859.600" y="790" textLength="27.700" lengthAdjust="spacingAndGlyphs">-8.87</text>
<!-- row 3 -->
<text class="m" x="417.800" y="809.500" textLength="59" lengthAdjust="spacingAndGlyphs">1496697979</text>
<text class="r" x="750" y="809.500" textLength="100" lengthAdjust="spacingAndGlyphs">2025.10.01 19:02:40</text>
<text class="r" x="853.500" y="809.500" textLength="45" lengthAdjust="spacingAndGlyphs">buy stop</text>
<text class="r" x="935" y="809.500" textLength="21" lengthAdjust="spacingAndGlyphs">0.10</text>
<text class="r" x="1039" y="809.500" textLength="35" lengthAdjust="spacingAndGlyphs">eurusd</text>
<text class="r" x="1153" y="809.500" textLength="38.500" lengthAdjust="spacingAndGlyphs">1.17777</text>
<text class="r" x="1269" y="809.500" textLength="38.500" lengthAdjust="spacingAndGlyphs">0.00000</text>
<text class="r" x="1384" y="809.500" textLength="38.500" lengthAdjust="spacingAndGlyphs">0.00000</text>
<text class="r" x="1499" y="809.500" textLength="38.500" lengthAdjust="spacingAndGlyphs">1.17271</text>
<!-- row 4 -->
<text class="m" x="417.800" y="829.500" textLength="59" lengthAdjust="spacingAndGlyphs">1496698646</text>
<text class="r" x="750" y="829.500" textLength="100" lengthAdjust="spacingAndGlyphs">2025.10.01 19:04:34</text>
<text class="r" x="853.500" y="829.500" textLength="46" lengthAdjust="spacingAndGlyphs">buy limit</text>
<text class="r" x="935" y="829.500" textLength="21" lengthAdjust="spacingAndGlyphs">0.05</text>
<text class="r" x="1039" y="829.500" textLength="35" lengthAdjust="spacingAndGlyphs">eurusd</text>
<text class="r" x="1153" y="829.500" textLength="38.500" lengthAdjust="spacingAndGlyphs">1.17121</text>
<text class="r" x="1269" y="829.500" textLength="38.500" lengthAdjust="spacingAndGlyphs">0.00000</text>
<text class="r" x="1384" y="829.500" textLength="38.500" lengthAdjust="spacingAndGlyphs">0.00000</text>
<text class="r" x="1499" y="829.500" textLength="38.500" lengthAdjust="spacingAndGlyphs">1.17271</text>
<!-- close x -->
<path d="M1898.500 742l6.500 7M1905 742l-6.500 7M1898.500 762l6.500 7M1905 762l-6.500 7M1898.500 802l6.500 7M1905 802l-6.500 7M1898.500 822l6.500 7M1905 822l-6.500 7" stroke="#9a9a9a" stroke-width="2"/>

<!-- tabs -->
<rect x="395" y="982" width="1519" height="24" fill="#f0f0f0"/>
<path d="M395 981.500H1912" stroke="#222"/>
<rect x="398.500" y="981.500" width="102.500" height="20.500" fill="#fff" stroke="#222"/>
<path d="M399 1003.500H502V982" stroke="#222" fill="none"/>
<text x="408.500" y="997" font-size="13" fill="#111" textLength="83" lengthAdjust="spacingAndGlyphs">Posizioni aperte</text>
<g>
<text class="t" x="511.600" y="997" textLength="60.700" lengthAdjust="spacingAndGlyphs">Esposizione</text>
<text class="t" x="592" y="997" textLength="95" lengthAdjust="spacingAndGlyphs">Storico operazioni</text>
<text class="t" x="707.500" y="997" textLength="36.500" lengthAdjust="spacingAndGlyphs">Notizie</text>
<text class="t" x="764" y="997" textLength="38" lengthAdjust="spacingAndGlyphs">Allarmi</text>
<text class="t" x="822.400" y="997" textLength="77.600" lengthAdjust="spacingAndGlyphs">Casella postale</text>
<text class="t" x="932.500" y="997" textLength="36.500" lengthAdjust="spacingAndGlyphs">Società</text>
<text class="t" x="990" y="997" textLength="44" lengthAdjust="spacingAndGlyphs">Mercato</text>
<text class="t" x="1070.800" y="997" textLength="38.200" lengthAdjust="spacingAndGlyphs">Articoli</text>
<text class="t" x="1129.500" y="997" textLength="52" lengthAdjust="spacingAndGlyphs">Biblioteca</text>
<text class="t" x="1201" y="997" textLength="55.300" lengthAdjust="spacingAndGlyphs">Consiglieri</text>
<text class="t" x="1277" y="997" textLength="30.300" lengthAdjust="spacingAndGlyphs">Diario</text>
</g>
<text x="902.400" y="1001" font-size="10.500" font-weight="700" fill="#f02020" textLength="9.600" lengthAdjust="spacingAndGlyphs">14</text>
<text x="1036.600" y="1001" font-size="10.500" font-weight="700" fill="#f02020" textLength="13.800" lengthAdjust="spacingAndGlyphs">127</text>
<path d="M582.500 986v13M697.500 986v13M754.500 986v13M812.500 986v13M922.500 986v13M980.500 986v13M1061.500 986v13M1119.500 986v13M1191.500 986v13M1267.500 986v13M1318.500 986v13" stroke="#8a8a8a"/>

<!-- status bar -->
<path d="M380 1005.500H1914" stroke="#fafafa"/>
<path d="M380 1007.500H1914" stroke="#ababab"/>
<rect x="380" y="1008" width="1534" height="21" fill="#f0f0f0"/>
<text x="382.500" y="1025.500" class="p" textLength="97.500" lengthAdjust="spacingAndGlyphs">Per aiuto, premi F1</text>
<path d="M1203.500 1011v18M1319.500 1011v18M1421.500 1011v18M1492.500 1011v18M1563.500 1011v18M1631.500 1011v18M1701.500 1011v18M1767.500 1011v18" stroke="#c4c4c4"/>
<text x="1209.500" y="1025.500" class="p" textLength="37.500" lengthAdjust="spacingAndGlyphs">Default</text>
<text x="1325" y="1025.500" class="p" textLength="84.400" lengthAdjust="spacingAndGlyphs">2025.09.29 19:00</text>
<text x="1427" y="1025.500" class="p" textLength="54" lengthAdjust="spacingAndGlyphs">O: 1.17284</text>
<text x="1498" y="1025.500" class="p" textLength="54" lengthAdjust="spacingAndGlyphs">H: 1.17314</text>
<text x="1569.500" y="1025.500" class="p" textLength="50.500" lengthAdjust="spacingAndGlyphs">L: 1.17211</text>
<text x="1638" y="1025.500" class="p" textLength="52" lengthAdjust="spacingAndGlyphs">C: 1.17212</text>
<text x="1707.600" y="1025.500" class="p" textLength="36.400" lengthAdjust="spacingAndGlyphs">V: 1273</text>
<path d="M1773.500 1027v-4M1776.500 1027v-6M1779.500 1027v-7M1782.500 1027v-8M1785.500 1027v-9M1788.500 1027v-10M1791.500 1027v-11M1794.500 1027v-12" stroke="#c0321e" stroke-width="1.600"/>
<path d="M1773.500 1023v-9M1776.500 1021v-7M1779.500 1020v-6M1782.500 1019v-5M1785.500 1018v-4M1788.500 1017v-3M1791.500 1016v-2" stroke="#6f8a10" stroke-width="1.600"/>
<text x="1800" y="1025.500" class="p" textLength="45" lengthAdjust="spacingAndGlyphs">504/5 kb</text>
<path d="M1913 1016l-6 10M1913 1020l-3 6" stroke="#b0b0b0"/>
</svg>
</body>
</html>
